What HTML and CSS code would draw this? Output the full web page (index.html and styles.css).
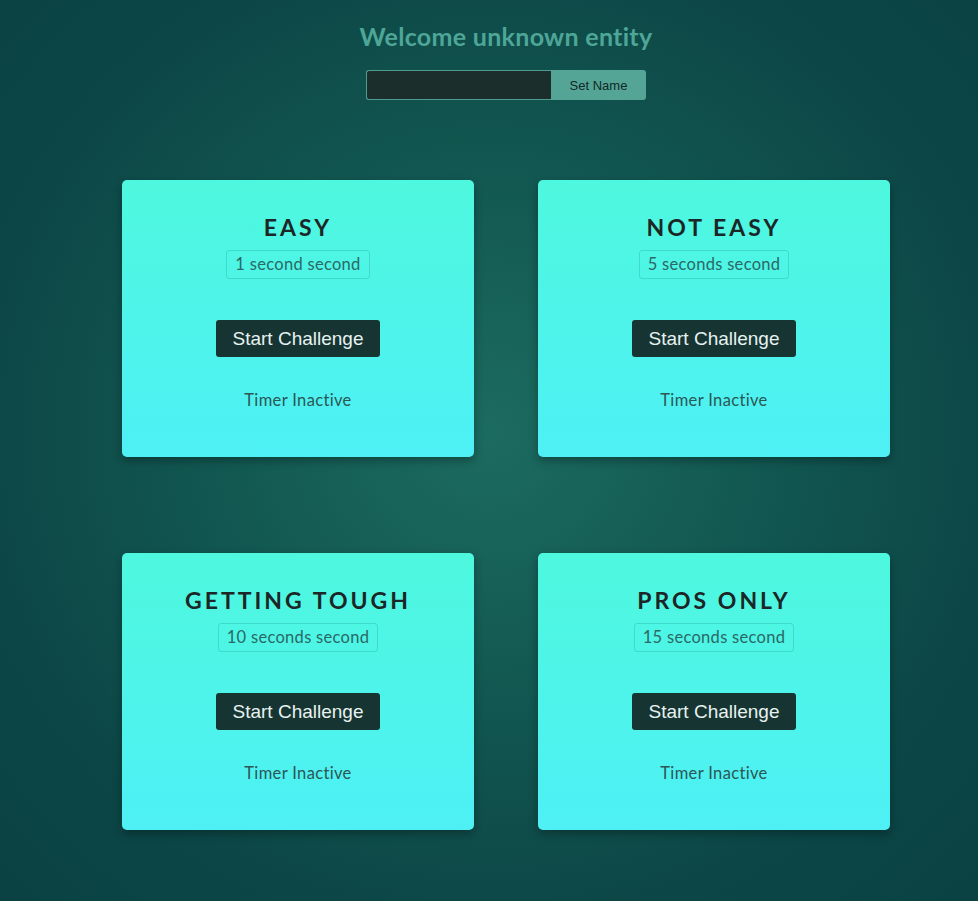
FILE: index.html
```html
<!DOCTYPE html>
<html>
<head>
<meta charset="utf-8">
<link rel="stylesheet" href="styles.css">
</head>
<body>
<div class="page">
  <header class="header">
    <h1 class="welcome">Welcome unknown entity</h1>
    <div class="name-form">
      <input class="name-input" type="text">
      <button class="name-btn">Set Name</button>
    </div>
  </header>
  <main class="grid">
    <section class="card">
      <h2 class="card-title">EASY</h2>
      <p class="badge">1 second second</p>
      <button class="start-btn">Start Challenge</button>
      <p class="timer">Timer Inactive</p>
    </section>
    <section class="card">
      <h2 class="card-title">NOT EASY</h2>
      <p class="badge">5 seconds second</p>
      <button class="start-btn">Start Challenge</button>
      <p class="timer">Timer Inactive</p>
    </section>
    <section class="card">
      <h2 class="card-title">GETTING TOUGH</h2>
      <p class="badge">10 seconds second</p>
      <button class="start-btn">Start Challenge</button>
      <p class="timer">Timer Inactive</p>
    </section>
    <section class="card">
      <h2 class="card-title">PROS ONLY</h2>
      <p class="badge">15 seconds second</p>
      <button class="start-btn">Start Challenge</button>
      <p class="timer">Timer Inactive</p>
    </section>
  </main>
</div>
</body>
</html>
```
FILE: styles.css
```css
html, body {
  margin: 0;
  padding: 0;
  height: 100%;
}
body {
  background: radial-gradient(ellipse at 50% 48%, #1c6b60 0%, #135a53 35%, #0c4646 75%, #0a4243 100%);
  font-family: Lato, "Noto Sans", sans-serif;
  overflow: hidden;
}
.page {
  display: flex;
  flex-direction: column;
  align-items: center;
  padding-left: 34px;
}
.header {
  display: flex;
  flex-direction: column;
  align-items: center;
}
.welcome {
  margin: 20px 0 0 0;
  font-size: 25px;
  line-height: 32px;
  font-weight: 700;
  color: #4ea697;
  letter-spacing: 0.3px;
}
.name-form {
  display: flex;
  margin-top: 18px;
}
.name-input {
  box-sizing: border-box;
  width: 185px;
  height: 30px;
  background: #1b2e2c;
  border: 1px solid #4f9c8f;
  border-right: none;
  border-radius: 3px 0 0 3px;
  outline: none;
  margin: 0;
}
.name-btn {
  box-sizing: border-box;
  width: 95px;
  height: 30px;
  background: #55a597;
  border: none;
  border-radius: 0 3px 3px 0;
  font-family: "Liberation Sans", Arial, sans-serif;
  font-size: 13px;
  color: #102826;
  margin: 0;
}
.grid {
  display: grid;
  grid-template-columns: 352px 352px;
  column-gap: 64px;
  row-gap: 96px;
  margin-top: 80px;
}
.card {
  box-sizing: border-box;
  height: 277px;
  border-radius: 5px;
  background: linear-gradient(180deg, #4ef8de 0%, #4ef0f5 100%);
  box-shadow: 0 4px 10px rgba(0, 0, 0, 0.3);
  display: flex;
  flex-direction: column;
  align-items: center;
  padding-top: 33px;
}
.card-title {
  margin: 0;
  font-size: 23px;
  line-height: 28px;
  font-weight: 700;
  letter-spacing: 3px;
  color: #1c2626;
}
.badge {
  margin: 9px 0 0 0;
  box-sizing: border-box;
  height: 29px;
  padding: 0 8px;
  border: 1px solid rgba(40, 170, 150, 0.35);
  border-radius: 3px;
  font-size: 16.5px;
  letter-spacing: 0.3px;
  line-height: 27px;
  color: #2a6966;
}
.start-btn {
  margin-top: 41px;
  box-sizing: border-box;
  height: 37px;
  padding: 0 16.5px;
  background: #163432;
  border: none;
  border-radius: 3px;
  font-family: "Liberation Sans", Arial, sans-serif;
  font-size: 19px;
  color: #e6f2ef;
}
.timer {
  margin: 33px 0 0 0;
  font-size: 16.5px;
  letter-spacing: 0.35px;
  line-height: 20px;
  color: #2b5755;
}
```
